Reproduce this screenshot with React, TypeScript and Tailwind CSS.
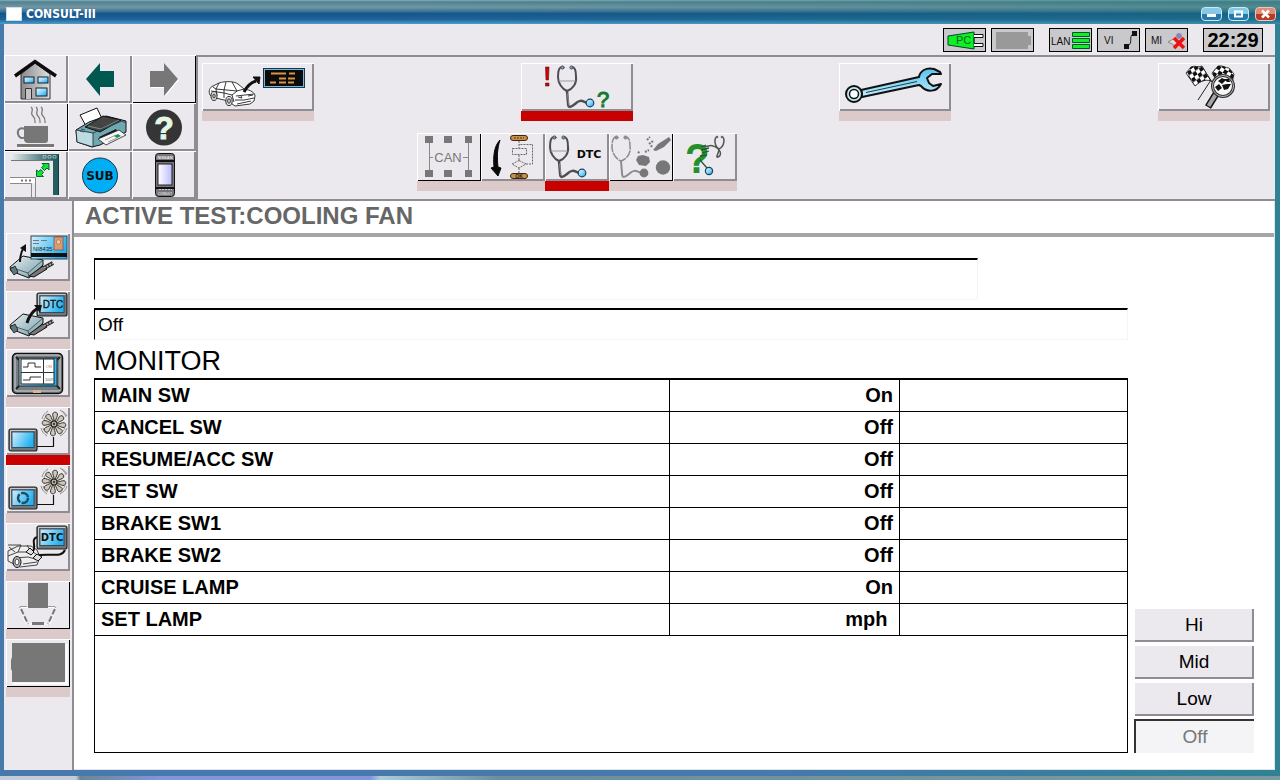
import type { ReactNode } from "react";

const rows = [
  { name: "MAIN SW", value: "On" },
  { name: "CANCEL SW", value: "Off" },
  { name: "RESUME/ACC SW", value: "Off" },
  { name: "SET SW", value: "Off" },
  { name: "BRAKE SW1", value: "Off" },
  { name: "BRAKE SW2", value: "Off" },
  { name: "CRUISE LAMP", value: "On" },
  { name: "SET LAMP", value: "mph\u00a0" },
];

const raised = "bg-[#ebe9ed] shadow-[inset_1px_1px_0_#fff,inset_-2px_-2px_0_#8f8d92]";
const raisedDisabled = "bg-[#ebe9ed] shadow-[inset_1px_1px_0_#fff,inset_-1px_-1px_0_#000]";

function Icon({ wide, children }: { wide?: boolean; children: ReactNode }) {
  return (
    <svg
      viewBox={wide ? "0 0 112 48" : "0 0 64 48"}
      className={wide ? "block h-12 w-28" : "block h-12 w-16"}
      fill="none"
      fontFamily="Liberation Sans, sans-serif"
      aria-hidden="true"
    >
      {children}
    </svg>
  );
}

function Gradients() {
  return (
    <svg className="absolute h-0 w-0" aria-hidden="true">
      <defs>
        <linearGradient id="glass" x1="0" y1="0" x2="1" y2="1">
          <stop offset="0" stopColor="#e8f8ff" />
          <stop offset="0.5" stopColor="#8fd8f8" />
          <stop offset="1" stopColor="#18a4ea" />
        </linearGradient>
        <linearGradient id="screen" x1="0" y1="0" x2="1" y2="0.4">
          <stop offset="0" stopColor="#d4f0fc" />
          <stop offset="1" stopColor="#25b2f0" />
        </linearGradient>
        <linearGradient id="steel" x1="0" y1="0" x2="1" y2="1">
          <stop offset="0" stopColor="#e8f0f2" />
          <stop offset="1" stopColor="#719aa5" />
        </linearGradient>
        <linearGradient id="wall" x1="0" y1="0" x2="1" y2="0">
          <stop offset="0" stopColor="#8b8b8d" />
          <stop offset="1" stopColor="#dededf" />
        </linearGradient>
        <linearGradient id="teal" x1="0" y1="0" x2="1" y2="0">
          <stop offset="0" stopColor="#e8eeee" />
          <stop offset="0.7" stopColor="#47757a" />
          <stop offset="1" stopColor="#145052" />
        </linearGradient>
        <linearGradient id="lilac" x1="0" y1="0" x2="1" y2="0">
          <stop offset="0" stopColor="#fff" />
          <stop offset="1" stopColor="#bcbcff" />
        </linearGradient>
        <linearGradient id="wrench" x1="0" y1="0" x2="0" y2="1">
          <stop offset="0" stopColor="#55c4ee" />
          <stop offset="1" stopColor="#c4ecf8" />
        </linearGradient>
        <pattern id="checkLeft" width="8" height="8" patternUnits="userSpaceOnUse" patternTransform="translate(29 9) rotate(-36) skewX(-6)">
          <rect width="8" height="8" fill="#fff" />
          <path d="M0 0 H4 V4 H0 Z M4 4 H8 V8 H4 Z" fill="#111" />
        </pattern>
        <pattern id="checkRight" width="8" height="8" patternUnits="userSpaceOnUse" patternTransform="translate(60 2) rotate(32)">
          <rect width="8" height="8" fill="#fff" />
          <path d="M0 0 H4 V4 H0 Z M4 4 H8 V8 H4 Z" fill="#111" />
        </pattern>
      </defs>
    </svg>
  );
}

function Stethoscope({ grey }: { grey?: boolean }) {
  const dark = grey ? "#8b8b8d" : "#4e4e52";
  return (
    <g strokeLinecap="round">
      <path
        d="M9 4 C6 4 5 9 5 14 C5 20 9 26 14 28 C20 26 24 20 23 14 C23 8 22 4 19 4"
        stroke={dark}
        strokeWidth={grey ? 1.5 : 2}
        strokeDasharray={grey ? "7 2" : undefined}
      />
      {!grey && <path d="M6 18 H22" stroke="#999" />}
      <path
        d="M14 28 L15 40 C15 46 18 44 22 41 C27 36 29 38 34 40"
        stroke={dark}
        strokeWidth={grey ? 2 : 2.5}
      />
      {!grey && <path d="M14.5 31 L16 42" stroke="#aaa" strokeWidth="0.6" />}
      <circle cx="9.5" cy="4.5" r="1.6" fill={grey ? dark : "#70a9bd"} stroke={dark} />
      <circle cx="18.5" cy="4.5" r="1.6" fill={grey ? dark : "#70a9bd"} stroke={dark} />
      <circle cx="37" cy="40" r="3.8" fill={grey ? "#777" : "url(#glass)"} stroke={grey ? "#777" : "#17455c"} strokeWidth="1.2" />
    </g>
  );
}

function Monitor({ x, y, w, h, children }: { x: number; y: number; w: number; h: number; children?: ReactNode }) {
  return (
    <g>
      <rect x={x} y={y} width={w} height={h} rx="2" fill="#6d787d" stroke="#222" strokeWidth="1.2" />
      <path d={`M${x + 1.5} ${y + h - 1.5} V${y + 1.5} H${x + w - 1.5}`} stroke="#c4cccf" />
      <rect x={x + 3} y={y + 3} width={w - 6} height={h - 6.5} fill="url(#screen)" stroke="#334" strokeWidth="0.8" />
      {children}
    </g>
  );
}

function Interface() {
  return (
    <g>
      <path d="M4 34 L17 23 L37 27 L37 32 L23 45 L5 38 Z" fill="url(#steel)" stroke="#111" />
      <path d="M4 34 L22 40 L37 27 M22 40 L23 45" stroke="#32454b" strokeWidth="0.8" />
      <path d="M4 36 L9 33 L12 39 L8 42 Z" fill="#60777e" stroke="#111" strokeWidth="0.8" />
      <path d="M23 43 L37 33 L41 36 L28 44 Z" fill="#777" stroke="#111" />
      <path d="M38 35 L47 30" stroke="#222" strokeWidth="4" />
      <path d="M38 35 L47 30" stroke="#aaa" strokeWidth="2" strokeDasharray="2 1" />
    </g>
  );
}

function Fan() {
  const blades = [10, 55, 100, 145, 190, 235, 280, 325];
  return (
    <g>
      {blades.map((angle) => (
        <path
          key={angle}
          d="M47.4 14 C47.2 11 45 10 45 7 C45.5 5 48.5 4.5 49.7 6.5 C50.4 9 48.8 11 49 14 Z"
          transform={`rotate(${angle} 48 17)`}
          fill="#d0c8b6"
          stroke="#2a2a2a"
          strokeWidth="0.9"
        />
      ))}
      <circle cx="48" cy="17" r="3" fill="#b5ab99" stroke="#222" />
      <circle cx="48" cy="17" r="1" fill="#222" />
      <path
        d="M36 12 C37 8 39 6 42 4 M38 13 C39 10 41 8 42 7 M54 3 C57 5 59 7 60 10 M56 4 C59 6 60 7 61 9 M35 21 C36 25 38 27 41 29 M37 21 C38 24 40 26 42 27 M54 29 C58 27 60 24 61 21 M53 27 C56 25 58 23 59 21"
        stroke="#777"
        strokeWidth="0.8"
      />
    </g>
  );
}

function Car() {
  return (
    <g stroke="#222" strokeWidth="0.9" strokeLinejoin="round">
      <path
        d="M8 32 C6 28 8 24 11 23 L17 20 C23 18 32 18 36 21 L42 26 C49 27 53 30 53 33 L52 38 L48 41 L33 43 L26 38 L10 34 Z"
        fill="#fff"
      />
      <path d="M11 24 L14 26 L35 28 L42 26 M17 20 L14 26 M24 19 L22 27 M30 19 L35 28 M35 28 L30 32 L32 39 M14 26 L15 33 M22 27 L22 35 M30 32 L22 30 L9 28 M34 33 L43 32 L52 31 M33 37 L42 37 L52 35 M36 34 L40 35 L39 33 M46 33 L51 32 M35 41 L49 38" />
      <ellipse cx="12" cy="33" rx="3" ry="4.5" fill="#ddd" />
      <ellipse cx="12" cy="33" rx="1.2" ry="2" />
      <ellipse cx="27" cy="38" rx="3.2" ry="4.6" fill="#ddd" />
      <ellipse cx="27" cy="38" rx="1.4" ry="2.2" />
    </g>
  );
}

const tools = [
  {
    label: "Home",
    icon: (
      <Icon>
        <path d="M17 19 L31 8 L46 19 V44 H17 Z" fill="url(#wall)" stroke="#333" />
        <path d="M11 21 L31 6.5 L52 21" stroke="#0c0c0c" strokeWidth="3.4" />
        <rect x="20" y="22" width="10" height="6" fill="url(#glass)" stroke="#123" />
        <rect x="34" y="22" width="10" height="6" fill="url(#glass)" stroke="#123" />
        <rect x="32" y="33" width="11" height="8" fill="url(#glass)" stroke="#123" />
        <path d="M21.5 44 V33.5 H27.5 V44" fill="#c4c4c4" stroke="#333" />
      </Icon>
    ),
  },
  {
    label: "Back",
    icon: (
      <Icon>
        <path d="M18 24 L32 8 V16 H46 V32 H32 V41 Z" fill="#005850" />
      </Icon>
    ),
  },
  {
    label: "Forward",
    disabled: true,
    icon: (
      <Icon>
        <path d="M47 25 L33 9 V17 H19 V33 H33 V42 Z" fill="#fff" />
        <path d="M46 24 L32 8 V16 H18 V32 H32 V41 Z" fill="#777" />
      </Icon>
    ),
  },
  {
    label: "Standby",
    disabled: true,
    icon: (
      <Icon>
        <path d="M27 4 C31 7 25 10 29 13 C32 16 31 18 31 20 M32 4 C36 7 30 10 34 13 C37 16 36 18 36 20 M37 4 C41 7 35 10 39 13 C42 16 41 18 41 20" stroke="#777" strokeWidth="1.2" />
        <path d="M20 23 H44 V37 Q44 40 41 40 H24 Q20 40 20 36 Z" fill="#777" />
        <path d="M21 26 C16 24 13 27 14 31 C15 35 18 36 21 34" stroke="#777" strokeWidth="2" />
        <rect x="13" y="41" width="37" height="3" fill="#777" />
        <path d="M14 44.5 H51" stroke="#fff" />
      </Icon>
    ),
  },
  {
    label: "Print",
    icon: (
      <Icon>
        <path d="M12 12 L29 5 L36 20 L19 25 Z" fill="#fff" stroke="#111" />
        <path d="M8 27 L21 19 L38 13 L58 18 V29 L32 42 L24 44 L9 39 Z" fill="#70a8b2" stroke="#111" />
        <path d="M8 27 L25 30 V44 L9 39 Z" fill="#bcdce2" stroke="#222" strokeWidth="0.8" />
        <path d="M17 24 L35 13 L53 17 L32 29 Z" fill="#444" stroke="#111" />
        <path d="M20 23 L33 26 L51 17" stroke="#888" />
        <path d="M25 30 L54 18 L58 20" stroke="#254b54" />
        <path d="M31 34 L48 26 L50 30 L34 39 Z" fill="#181818" />
        <path d="M30 36 L51 27 L58 32 L38 42 Z" fill="#f7f7f7" stroke="#222" strokeWidth="0.8" />
        <path d="M37 37 L48 32 M40 39 L49 35" stroke="#999" />
        <path d="M46 33 L50 31 L53 33 L49 35 Z" fill="#1b9251" />
        <path d="M13 26 L17 27 M12 28 L16 29" stroke="#33545b" />
      </Icon>
    ),
  },
  {
    label: "Help",
    icon: (
      <Icon>
        <circle cx="32" cy="24.5" r="18" fill="#353535" />
        <text x="32" y="36" fontSize="32" fontWeight="700" textAnchor="middle" fill="#e4f7e4" stroke="#e4f7e4">?</text>
      </Icon>
    ),
  },
  {
    label: "Switch window",
    icon: (
      <Icon>
        <rect x="7" y="3" width="48" height="6" fill="url(#teal)" />
        <rect x="49" y="3" width="6" height="41" fill="#245e61" />
        <path d="M54.5 4 V44" stroke="#0d3c3e" />
        <path d="M39 4.5 H42 V7 H39 Z M44 4.5 H47 V7 H44 Z M49 4.5 H52 V7 H49 Z" stroke="#b8caca" strokeWidth="0.8" />
        <path d="M7 9.5 H49" stroke="#777" />
        <path d="M6 26.5 H31.5 V46 M6 32.5 H27.5 V46" stroke="#8a8a8a" />
        <rect x="6" y="27" width="25" height="5" fill="#fff" />
        <path d="M17 29.5 H28" stroke="#777" strokeWidth="2" strokeDasharray="2 2" />
        <path d="M38 12.5 H45 V19 L43 17 L40.5 19.5 L37.5 16.5 L40 14.5 Z M32.5 19 L34.5 20.500 L37 18.5 L39.5 21.5 L37.5 23.5 L39.5 25.5 H32.5 Z" fill="#14e030" stroke="#063" />
      </Icon>
    ),
  },
  {
    label: "Sub mode",
    icon: (
      <Icon>
        <circle cx="32" cy="24.5" r="17.5" fill="#00aef5" stroke="#173848" />
        <text x="32" y="29" fontSize="12" fontWeight="700" fontFamily="DejaVu Sans, sans-serif" textAnchor="middle" fill="#111">SUB</text>
      </Icon>
    ),
  },
  {
    label: "Handheld",
    icon: (
      <Icon>
        <rect x="23.5" y="2.5" width="19" height="43" rx="3" fill="#77777b" stroke="#111" />
        <path d="M24 10 H42 M24 37 H42" stroke="#111" strokeWidth="2" />
        <text x="33" y="8" fontSize="4" fontWeight="700" textAnchor="middle" fill="#eee">NISSAN</text>
        <rect x="26" y="13" width="14" height="21" fill="url(#lilac)" stroke="#222" />
        <path d="M27 38.5 H40" stroke="#ccc" strokeDasharray="2 1" />
        <text x="33" y="44" fontSize="3" textAnchor="middle" fill="#fff">CONSULT</text>
      </Icon>
    ),
  },
];

const modes = [
  {
    label: "Vehicle to display",
    icon: (
      <Icon wide>
        <Car />
        <path d="M42 29 C45 23 48 20 54 18" stroke="#111" strokeWidth="3" />
        <path d="M51 14 L58 14 L57 21 Z" fill="#111" stroke="#111" />
        <rect x="61.5" y="5.5" width="41" height="19" fill="#78b7d8" stroke="#18364a" />
        <rect x="63" y="7" width="38" height="16" fill="#0b0b0b" />
        <path d="M69 10.5 H84 M87 10.5 H93 M77 15.5 H84 M86 15.5 H93 M68 19.5 H74 M77 19.5 H84 M86 19.5 H92" stroke="#d99442" strokeWidth="2" />
      </Icon>
    ),
  },
  {
    label: "Diagnosis",
    active: true,
    icon: (
      <Icon wide>
        <path d="M24.5 4 H28 L27.5 17 H25 Z M24.5 20 H28 V23 H24.5 Z" fill="#d60000" stroke="#511" strokeWidth="0.6" />
        <g transform="translate(32 0)">
          <Stethoscope />
        </g>
        <text x="82" y="44" fontSize="22" textAnchor="middle" fill="#137a32" stroke="#137a32">?</text>
      </Icon>
    ),
  },
  {
    label: "Maintenance",
    icon: (
      <Icon wide>
        <path
          d="M22 27 L80 14 C81 8 87 4 95 6 L101 9 L102 11 L93 11 L88 15 L90 20 L94 23 L102 21 C98 29 88 30 82 23 L80 22 L23 34 Z"
          fill="url(#wrench)"
          stroke="#111"
          strokeWidth="2"
          strokeLinejoin="round"
        />
        <path d="M27 29.5 L78 18.5" stroke="#173c50" />
        <circle cx="15" cy="31" r="8" fill="#c4ecf8" stroke="#111" strokeWidth="2" />
        <circle cx="15" cy="31" r="4.5" fill="#fff" stroke="#111" strokeWidth="1.5" />
      </Icon>
    ),
  },
  {
    label: "Test results",
    icon: (
      <Icon wide>
        <path d="M44 4 L56 22 M53 17 L40 37" stroke="#222" />
        <path d="M28 10 L33 4 C37 2 40 5 44 3 L53 18 C47 16 43 18 37 23 Z" fill="url(#checkLeft)" stroke="#111" strokeWidth="0.8" />
        <path d="M54 10 L60 3 C65 2 67 5 71 5 L76 11 L74 20 L60 20 Z" fill="url(#checkRight)" stroke="#111" strokeWidth="0.8" />
        <path d="M58 31 L50 44" stroke="#111" strokeWidth="7" />
        <path d="M58 31 L50.5 43" stroke="#a5a5a5" strokeWidth="4" />
        <circle cx="65" cy="23" r="10.5" fill="#f7f7f7" stroke="#333" strokeWidth="3" />
        <circle cx="65" cy="23" r="10.5" stroke="#bbb" />
        <path d="M60 18 L64 15 L68 17 L64 21 Z M69 21 L64 22 L66 27 L70 26 L73 21 Z M57 24 L61 21 L64 25 L60 28 Z M66 16 L71 16 L72 19 L69 19 Z" fill="#111" />
      </Icon>
    ),
  },
];

const tests = [
  {
    label: "CAN diagnosis",
    disabled: true,
    icon: (
      <Icon>
        <path d="M12.5 10 V38 M51.5 10 V38 M12 24.5 H16 M46 24.5 H52" stroke="#888" />
        <path d="M8 3 h8 v7 h-8 Z M27 3 h8 v7 h-8 Z M48 3 h7 v7 h-7 Z M8 37 h8 v7 h-8 Z M27 37 h8 v7 h-8 Z M48 37 h7 v7 h-7 Z" fill="#777" />
        <text x="31" y="29" fontSize="13" textAnchor="middle" fill="#777">CAN</text>
      </Icon>
    ),
  },
  {
    label: "Work flow",
    icon: (
      <Icon>
        <path d="M19 7 C13 13 12 24 13 34 L10 35 L17 43 L20 35 L17 34 C16 25 16 16 19 7 Z" fill="#090909" stroke="#090909" />
        <rect x="29.5" y="2.5" width="17" height="5" rx="2.5" fill="#c6904d" stroke="#432509" />
        <rect x="29.5" y="40.5" width="17" height="5" rx="2.5" fill="#c6904d" stroke="#432509" />
        <text x="38" y="45" fontSize="5" fontWeight="700" textAnchor="middle" fill="#222">OK</text>
        <path d="M33 5 H43" stroke="#5a3512" strokeDasharray="2 1" />
        <path d="M38 8 V15 M31.5 15.5 H45.5 V21.5 H31.5 Z M38 22 V28 M38 27.5 L45 31 L38 35 L31 31 Z M38 35 V40 M45 31 H51.5 V11.5 H38" stroke="#666" strokeDasharray="2 1" />
      </Icon>
    ),
  },
  {
    label: "DTC diagnosis",
    active: true,
    icon: (
      <Icon>
        <Stethoscope />
        <text x="44" y="25" fontSize="11" fontWeight="700" fontFamily="DejaVu Sans, sans-serif" textAnchor="middle" fill="#0a0a0a">DTC</text>
      </Icon>
    ),
  },
  {
    label: "Component check",
    disabled: true,
    icon: (
      <Icon>
        <g transform="translate(-2 0)">
          <Stethoscope grey />
        </g>
        <path d="M27 27 L29 23 L34 22 L40 24 L41 29 L37 33 L30 32 Z" fill="#777" />
        <circle cx="54" cy="34.5" r="7.2" fill="#777" />
        <path d="M44 17 L49 11 L60 4 L62 7 L55 14 L47 18 Z" fill="#777" />
        <path d="M38 7 L41 4 M40 11 L44 8 M42 14 L43 12 M29 20 L31 18 M36 19 L40 17" stroke="#777" strokeWidth="2" strokeDasharray="2 1" />
      </Icon>
    ),
  },
  {
    label: "Symptom diagnosis",
    icon: (
      <Icon>
        <path d="M44 4 C41 4 41 13 46 16 C52 13 52 4 49 4 M46 16 C46 20 42 25 45 24 C50 22 47 15 40 13 C36 11 35 15 30 13" stroke="#555" strokeWidth="1.5" />
        <circle cx="44" cy="4" r="1.3" fill="#668" />
        <circle cx="49" cy="4" r="1.3" fill="#668" />
        <text x="24" y="39" fontSize="38" textAnchor="middle" fill="#24902b" stroke="#24902b" strokeWidth="2">?</text>
        <path d="M28 14 L33 12 M28 17 L36 15 M29 20 L36 18 M27 23 L34 22 M27 27 L34 35" stroke="#285832" strokeWidth="1.3" />
        <circle cx="36" cy="38" r="3.6" fill="url(#glass)" stroke="#17455c" strokeWidth="1.2" />
      </Icon>
    ),
  },
];

const functions = [
  {
    label: "ECU identification",
    icon: (
      <Icon>
        <Interface />
        <path d="M14 29 C14 23 15 19 18 14" stroke="#111" strokeWidth="2" />
        <path d="M14 15 L20 11 V19 Z" fill="#111" />
        <rect x="25" y="3" width="36" height="23" fill="url(#screen)" stroke="#345" />
        <rect x="25" y="20" width="36" height="4" fill="#111" />
        <path d="M27 7.5 H42 M27 10.5 H35" stroke="#778" strokeDasharray="6 2" />
        <text x="27" y="18" fontSize="6" fill="#222">NI8435</text>
        <rect x="48" y="4" width="9" height="13" fill="#d99c70" stroke="#844" strokeWidth="0.7" />
        <circle cx="52.5" cy="9" r="2.2" fill="#f3caaa" stroke="#853" strokeWidth="0.5" />
      </Icon>
    ),
  },
  {
    label: "Self diagnostic result",
    icon: (
      <Icon>
        <Interface />
        <Monitor x={31} y={2} w={30} h={23}>
          <text x="47" y="17" fontSize="10" textAnchor="middle" fill="#111" stroke="#111" strokeWidth="0.3">DTC</text>
        </Monitor>
        <path d="M21 32 C23 25 27 20 32 17" stroke="#111" strokeWidth="3" />
        <path d="M28 14 L36 14 L34 22 Z" fill="#111" />
      </Icon>
    ),
  },
  {
    label: "Data monitor",
    icon: (
      <Icon>
        <rect x="6.5" y="4.5" width="50" height="40" rx="4" fill="#777e83" stroke="#111" strokeWidth="1.5" />
        <rect x="9" y="6" width="45" height="36" rx="2" stroke="#ccd3d6" />
        <path d="M10 8 L13 11 M54 8 L51 11 M10 40 L13 37 M54 40 L51 37" stroke="#222" strokeWidth="2" />
        <rect x="13" y="9" width="38" height="28" fill="url(#screen)" stroke="#222" />
        <rect x="15" y="10" width="33" height="25" fill="#fff" stroke="#18202a" />
        <path d="M37.5 10 V35 M15 23.5 H48 M17 18 H22 V14 H29 V18 H35 M17 31 H24 V28 H35" stroke="#333" />
        <text x="40" y="19" fontSize="4" fill="#c87a38">ON</text>
        <text x="39" y="32" fontSize="4" fill="#555">100%</text>
        <rect x="27" y="41" width="8" height="3" fill="#d4b79a" />
      </Icon>
    ),
  },
  {
    label: "Active test",
    active: true,
    icon: (
      <Icon>
        <Fan />
        <path d="M31 39.5 H47.5 V30" stroke="#111" strokeWidth="1.2" />
        <Monitor x={3} y={22} w={28} h={22} />
      </Icon>
    ),
  },
  {
    label: "Work support",
    icon: (
      <Icon>
        <Fan />
        <path d="M31 39.5 H47.5 V30" stroke="#111" strokeWidth="1.2" />
        <Monitor x={3} y={22} w={28} h={22}>
          <circle cx="17" cy="33" r="5" stroke="#194f66" strokeWidth="2.5" strokeDasharray="9 1.47" />
        </Monitor>
      </Icon>
    ),
  },
  {
    label: "Vehicle DTC check",
    icon: (
      <Icon>
        <path d="M2 28 L12 23 L25 23 L31 27 L34 34 L31 42 L14 44 L2 38 Z" fill="#eee" stroke="#444" />
        <path d="M2 22 L15 22 L12 29 L2 33 M12 29 L27 29 L33 33 M8 35 L22 34 L33 37 M3 24 L9 29 M21 22 L25 29 M17 41 L31 39" stroke="#333" strokeWidth="0.9" />
        <ellipse cx="11" cy="39" rx="4" ry="5.5" fill="#bbb" stroke="#111" />
        <ellipse cx="11" cy="39" rx="2" ry="3" fill="#fff" stroke="#444" />
        <path d="M27 28 C31 23 24 17 31 14 M29 33 C43 29 55 36 59 27" stroke="#111" strokeWidth="2" />
        <path d="M20 29 L24 25 L28 29 L25 32 Z M27 35 L31 31 L36 34 L32 38 Z" fill="#ddd" stroke="#111" />
        <Monitor x={31} y={3} w={30} h={23}>
          <text x="46" y="18" fontSize="10" fontWeight="700" fontFamily="DejaVu Sans, sans-serif" textAnchor="middle" fill="#111">DTC</text>
        </Monitor>
      </Icon>
    ),
  },
  {
    label: "Recording",
    disabled: true,
    icon: (
      <Icon>
        <rect x="22" y="2" width="20" height="25" fill="#777" />
        <path d="M22 26.5 H15 L14 28 L20 43 H44 L50 28 L48 26.5 H42" stroke="#fff" />
        <path d="M21 25.5 H14 L13.5 27 M42 25.5 H49 L50 27" stroke="#999" />
        <path d="M15 28 L22 43 M49 28 L42 43" stroke="#777" strokeWidth="2" strokeDasharray="6 2" />
        <rect x="26" y="41" width="12" height="3" fill="#777" />
      </Icon>
    ),
  },
  {
    label: "Display",
    disabled: true,
    icon: (
      <Icon>
        <path d="M7 44.5 H60.5 V5" stroke="#fff" strokeWidth="2" />
        <path d="M6 4 H59 V43 H6 V32 L5 30 V21 L6 18 Z" fill="#777" />
      </Icon>
    ),
  },
];

function StatusBox({ children }: { children: ReactNode }) {
  return (
    <div className="h-6 w-[43px] border border-black bg-[#c9c8ca]">
      <svg viewBox="0 0 41 22" className="block h-full w-full" fill="none" fontFamily="Liberation Sans, sans-serif">
        {children}
      </svg>
    </div>
  );
}

function Strip({ active }: { active?: boolean }) {
  return <div className={active ? "h-2.5 bg-[#c80000]" : "h-2.5 bg-[#dccaca]"} />;
}

export default function App() {
  return (
    <div className="flex min-h-screen flex-col bg-[linear-gradient(to_right,#4779ad_60%,#2f8294_100%)] font-['Liberation_Sans',sans-serif] text-black">
      <Gradients />
      <header className="flex h-6 items-center bg-[linear-gradient(to_right,transparent_30%,#20787266_100%),linear-gradient(to_bottom,#7fb3c0_0%,#54808f_8%,#7197a5_30%,#3b7197_48%,#15568a_56%,#1d629a_80%,#4f9dcb_100%)] pt-1 pr-1 pl-1.5">
        <div className="mr-1 h-3.5 w-4 border border-[#c8e0e8] bg-white" />
        <h1 className="text-xs leading-4 font-bold text-white [font-family:'DejaVu_Sans_Condensed','DejaVu_Sans',sans-serif]">CONSULT-III</h1>
        <div className="ml-auto flex gap-1.5">
          <button aria-label="Minimize" className="h-3.5 w-[21px] rounded-sm border border-[#c4ebf8] bg-linear-to-b from-[#86c9e6] from-50% to-[#2677ab] to-50%">
            <svg viewBox="0 0 19 12" className="block h-3 w-[19px]"><rect x="5" y="6" width="9" height="3" fill="#fff" /></svg>
          </button>
          <button aria-label="Maximize" className="h-3.5 w-[21px] rounded-sm border border-[#c4ebf8] bg-linear-to-b from-[#86c9e6] from-50% to-[#2677ab] to-50%">
            <svg viewBox="0 0 19 12" className="block h-3 w-[19px]"><rect x="6" y="3.5" width="7" height="5" fill="none" stroke="#fff" strokeWidth="2" /></svg>
          </button>
          <button aria-label="Close" className="h-3.5 w-[21px] rounded-sm border border-[#f2c4b8] bg-linear-to-b from-[#dd8c78] from-50% to-[#b93a25] to-50%">
            <svg viewBox="0 0 19 12" className="block h-3 w-[19px]"><path d="M6 2.5 L13 9.5 M13 2.5 L6 9.5" stroke="#fff" strokeWidth="2.5" /></svg>
          </button>
        </div>
      </header>

      <div className="mr-[5px] ml-1 flex flex-1 flex-col bg-[#ebe9ed]">
        <div className="flex h-[31px] items-center justify-end gap-[5px] pr-3">
          <StatusBox>
            <path d="M4 7 L30 3 V20 L4 16 Z" fill="#10ef20" stroke="#043" />
            <path d="M30 5.5 H39 V8.5 H30 M30 14.5 H39 V17.5 H30" fill="#fff" stroke="#111" />
            <path d="M30 9 V14" stroke="#043" />
            <text x="12" y="15" fontSize="11" fill="#063">PC</text>
          </StatusBox>
          <StatusBox>
            <path d="M4 3 H36 V7 H39 V16 H36 V20 H4 Z" fill="#999" />
          </StatusBox>
          <div className="w-[5px]" />
          <StatusBox>
            <text x="1" y="16" fontSize="10" fill="#111">LAN</text>
            <path d="M22.5 3.5 H39.5 V7.5 H22.5 Z M22.5 9.5 H39.5 V13.5 H22.5 Z M22.5 15.5 H39.5 V19.5 H22.5 Z" fill="#10ef20" stroke="#053" />
          </StatusBox>
          <StatusBox>
            <text x="6" y="15" fontSize="10" fill="#111">VI</text>
            <path d="M28 17 C37 16 29 6 36 5" stroke="#222" />
            <path d="M34 2 h5 v5 h-5 Z M26 15 h5 v5 h-5 Z" fill="#111" />
          </StatusBox>
          <StatusBox>
            <text x="5" y="15" fontSize="10" fill="#111">MI</text>
            <path d="M22 13 L31 8 L37 12 L30 17 Z" fill="#ddd" stroke="#888" />
            <circle cx="33" cy="7" r="3.5" fill="#88a" stroke="#ccd" />
            <path d="M28 9 L38 19 M38 9 L28 19" stroke="#ef1111" strokeWidth="3.5" />
          </StatusBox>
          <div className="w-[5px]" />
          <time className="h-6 w-[60px] border border-black bg-[#c9c8ca] text-center text-xl leading-[22px] font-bold">22:29</time>
        </div>

        <div className="flex h-36">
          <nav aria-label="Tools" className="grid w-48 shrink-0 grid-cols-3">
            {tools.map((tool) => (
              <button key={tool.label} aria-label={tool.label} disabled={tool.disabled} className={tool.disabled ? raisedDisabled : raised}>
                {tool.icon}
              </button>
            ))}
          </nav>
          <div className="flex-1 border-t-2 border-l-2 border-[#8f8d92] pt-1.5 pr-[5px] pl-1">
            <nav aria-label="Modes" className="flex justify-between">
              {modes.map((mode) => (
                <div key={mode.label}>
                  <button aria-label={mode.label} className={`block ${raised}`}>
                    {mode.icon}
                  </button>
                  <Strip active={mode.active} />
                </div>
              ))}
            </nav>
            <nav aria-label="Tests" className="mt-3 ml-[215px] flex">
              {tests.map((test) => (
                <div key={test.label}>
                  <button aria-label={test.label} disabled={test.disabled} className={`block ${test.disabled ? raisedDisabled : raised}`}>
                    {test.icon}
                  </button>
                  <Strip active={test.active} />
                </div>
              ))}
            </nav>
          </div>
        </div>

        <div className="flex flex-1 border-t-2 border-[#8f8d92]">
          <nav aria-label="Functions" className="w-[70px] shrink-0 border-r-2 border-[#8f8d92] px-0.5 pt-8">
            {functions.map((item) => (
              <div key={item.label}>
                <button aria-label={item.label} disabled={item.disabled} className={`block ${item.disabled ? raisedDisabled : raised}`}>
                  {item.icon}
                </button>
                <Strip active={item.active} />
              </div>
            ))}
          </nav>

          <main className="flex flex-1 flex-col border-r border-b border-[#dde5ea] bg-white">
            <h2 className="h-9 border-b-4 border-[#a5a5a5] pl-[11px] text-2xl leading-[30px] font-bold text-[#666]">ACTIVE TEST:COOLING FAN</h2>
            <div className="flex flex-1 gap-1.5 pt-[21px] pr-5 pb-4 pl-5">
              <div className="flex flex-1 flex-col">
                <input
                  aria-label="Message"
                  readOnly
                  className="mr-[150px] h-[42px] border border-t-2 border-[#f4f4f4] border-t-black border-l-black px-1 outline-none"
                />
                <input
                  aria-label="Test item"
                  readOnly
                  value="Off"
                  className="mt-2 h-8 border border-t-2 border-[#f4f4f4] border-t-black border-l-black px-[3px] text-[19px] leading-7 outline-none"
                />
                <h3 className="mt-1.5 h-8 text-[27px] leading-[30px]">MONITOR</h3>
                <div className="flex-1 border border-t-2 border-black">
                  <table className="w-full table-fixed border-separate border-spacing-0 text-xl leading-[31px] font-bold">
                    <tbody>
                      {rows.map((row) => (
                        <tr key={row.name} className="h-8">
                          <th scope="row" className="border-r border-b border-black p-0 pl-1.5 text-left">{row.name}</th>
                          <td className="w-[230px] border-r border-b border-black p-0 pr-1.5 text-right">{row.value}</td>
                          <td className="w-[227px] border-b border-black p-0" />
                        </tr>
                      ))}
                    </tbody>
                  </table>
                </div>
              </div>
              <div className="flex w-[120px] flex-col justify-end gap-[3px] text-[19px]">
                <button className={`h-[34px] ${raised}`}>Hi</button>
                <button className={`h-[34px] ${raised}`}>Mid</button>
                <button className={`h-[34px] ${raised}`}>Low</button>
                <button disabled className="h-[34px] border-t-2 border-l-2 border-[#333] bg-[#f4f3f5] text-[#777]">Off</button>
              </div>
            </div>
          </main>
        </div>
      </div>
      <footer className="mt-1.5 h-1 bg-[linear-gradient(to_right,#c3ccd8_0,#c3ccd8_76px,#6b8794_80px,#8294dc_160px,#8294dc_370px,#a9ccd8_380px,#6b8f9b_500px,#7b9aa0_100%)]" />
    </div>
  );
}
